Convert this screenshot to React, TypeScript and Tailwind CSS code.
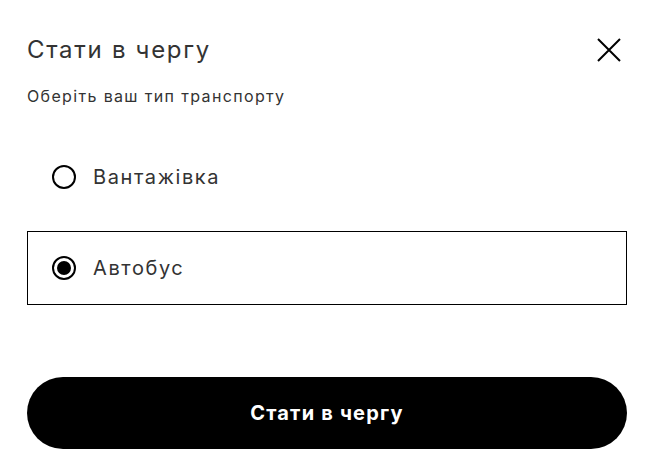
import React, { useState } from 'react'

const options = ['Вантажівка', 'Автобус']

function Radio({ checked }: { checked: boolean }) {
  return (
    <span className="flex h-[24px] w-[24px] shrink-0 items-center justify-center rounded-full border-2 border-black">
      {checked && <span className="h-[14px] w-[14px] rounded-full bg-black" />}
    </span>
  )
}

export default function App() {
  const [selected, setSelected] = useState(1)

  return (
    <div className="min-h-screen bg-white px-[27px] pt-[32px] font-['Inter',sans-serif] text-[#333]">
      <div className="flex items-center justify-between">
        <h1 className="text-[24px] leading-[36px] tracking-[1.7px]">Стати в чергу</h1>
        <button type="button" aria-label="Закрити" className="mr-[6px] text-black">
          <svg width="24" height="24" viewBox="0 0 24 24" fill="none" stroke="currentColor" strokeWidth="2">
            <path d="M1 1L23 23M23 1L1 23" />
          </svg>
        </button>
      </div>
      <p className="mt-[16px] text-[16px] leading-[24px] tracking-[1.35px]">Оберіть ваш тип транспорту</p>

      <div className="mt-[32px] flex flex-col gap-[17px]">
        {options.map((label, i) => (
          <button
            key={label}
            type="button"
            onClick={() => setSelected(i)}
            className={
              'flex h-[74px] items-center gap-[17px] border px-[24px] text-left ' +
              (selected === i ? 'border-black' : 'border-transparent')
            }
          >
            <Radio checked={selected === i} />
            <span className="text-[20px] tracking-[1.6px] text-[#333]">{label}</span>
          </button>
        ))}
      </div>

      <button
        type="button"
        className="mt-[72px] flex h-[72px] w-full items-center justify-center rounded-full bg-black text-[20px] font-bold tracking-[1.2px] text-white"
      >
        Стати в чергу
      </button>
    </div>
  )
}
